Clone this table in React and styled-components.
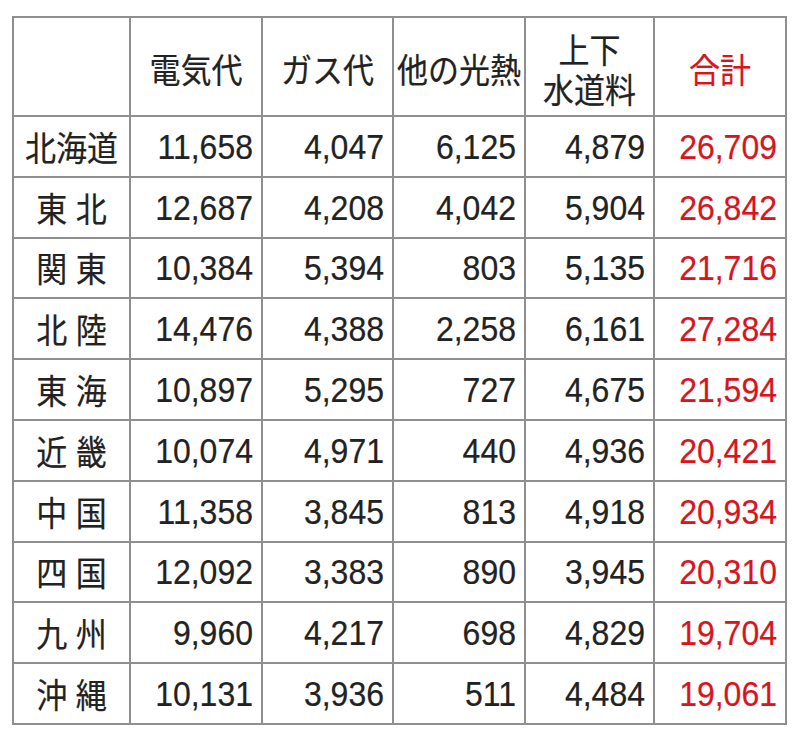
import styled, { createGlobalStyle } from "styled-components";

const GlobalStyle = createGlobalStyle`
  body {
    margin: 0;
    background: #fff;
    font-family: "Liberation Sans", "Noto Sans CJK JP", sans-serif;
  }
`;

const Page = styled.div`
  padding: 16px 0 0 12px;
`;

const Table = styled.table`
  border-collapse: collapse;
  table-layout: fixed;
  width: 773px;
  color: #222;
  font-size: 31px;
  border: 2px solid #8f8f8f;
`;

const HeadRow = styled.tr`
  height: 99px;
`;

const BodyRow = styled.tr`
  height: 60.8px;
`;

const Th = styled.th`
  border: 2px solid #8f8f8f;
  font-weight: normal;
  text-align: center;
  vertical-align: middle;
  line-height: 36px;
  padding: 10px 0 0;
  white-space: nowrap;
  color: ${(p) => (p.$red ? "#d8141c" : "#222")};
`;

const Label = styled.td`
  border: 2px solid #8f8f8f;
  text-align: center;
  vertical-align: middle;
  padding: 0;
  white-space: pre;
`;

const Num = styled.td`
  border: 2px solid #8f8f8f;
  text-align: right;
  vertical-align: middle;
  padding: 2px 8px 0 0;
  font-size: 32px;
  color: ${(p) => (p.$red ? "#d8141c" : "#222")};
`;

// the scan is a little taller and heavier than the plain font
const Text = styled.span`
  display: inline-block;
  transform: scaleY(1.1);
  -webkit-text-stroke: 0.2px currentColor;
`;

const widths = [117, 132, 131, 132, 129, 132];

const rows = [
  ["北海道", "11,658", "4,047", "6,125", "4,879", "26,709"],
  ["東 北", "12,687", "4,208", "4,042", "5,904", "26,842"],
  ["関 東", "10,384", "5,394", "803", "5,135", "21,716"],
  ["北 陸", "14,476", "4,388", "2,258", "6,161", "27,284"],
  ["東 海", "10,897", "5,295", "727", "4,675", "21,594"],
  ["近 畿", "10,074", "4,971", "440", "4,936", "20,421"],
  ["中 国", "11,358", "3,845", "813", "4,918", "20,934"],
  ["四 国", "12,092", "3,383", "890", "3,945", "20,310"],
  ["九 州", "9,960", "4,217", "698", "4,829", "19,704"],
  ["沖 縄", "10,131", "3,936", "511", "4,484", "19,061"],
];

export default function App() {
  return (
    <Page>
      <GlobalStyle />
      <Table>
        <colgroup>
          {widths.map((w, i) => (
            <col key={i} style={{ width: w }} />
          ))}
        </colgroup>
        <thead>
          <HeadRow>
            <Th></Th>
            <Th><Text>電気代</Text></Th>
            <Th><Text>ガス代</Text></Th>
            <Th><Text>他の光熱</Text></Th>
            <Th>
              <Text>
                上下
                <br />
                水道料
              </Text>
            </Th>
            <Th $red><Text>合計</Text></Th>
          </HeadRow>
        </thead>
        <tbody>
          {rows.map((r) => (
            <BodyRow key={r[0]}>
              <Label><Text>{r[0]}</Text></Label>
              <Num><Text>{r[1]}</Text></Num>
              <Num><Text>{r[2]}</Text></Num>
              <Num><Text>{r[3]}</Text></Num>
              <Num><Text>{r[4]}</Text></Num>
              <Num $red><Text>{r[5]}</Text></Num>
            </BodyRow>
          ))}
        </tbody>
      </Table>
    </Page>
  );
}
